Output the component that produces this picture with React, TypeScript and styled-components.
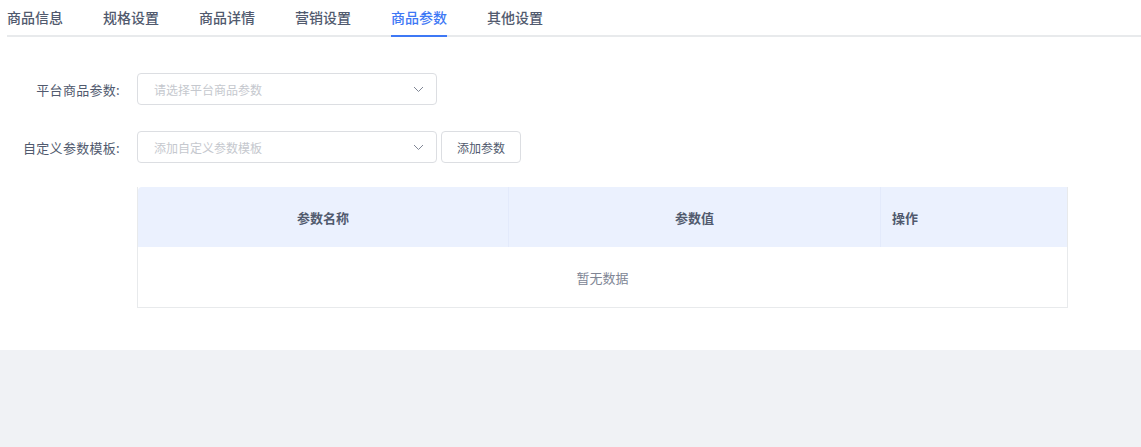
import React from 'react';
import styled, { createGlobalStyle } from 'styled-components';

const GlobalStyle = createGlobalStyle`
  html, body {
    margin: 0;
    padding: 0;
    background: #f0f2f5;
    font-family: "Noto Sans CJK SC", "Noto Sans", sans-serif;
  }
`;

const Card = styled.div`
  background: #fff;
  height: 350px;
  box-sizing: border-box;
  padding-left: 7px;
`;

const TabBar = styled.div`
  display: flex;
  gap: 40px;
  height: 35px;
  border-bottom: 2px solid #e8eaec;
`;

const Tab = styled.div<{ $active?: boolean }>`
  position: relative;
  font-size: 14px;
  line-height: 35px;
  font-weight: 500;
  color: ${(p) => (p.$active ? '#3e78f5' : '#515a6e')};
  cursor: pointer;

  &::after {
    content: '';
    display: ${(p) => (p.$active ? 'block' : 'none')};
    position: absolute;
    left: 0;
    right: 0;
    bottom: -2px;
    height: 2px;
    background: #3e78f5;
  }
`;

const Form = styled.div`
  margin-left: -7px;
  padding-top: 36px;
`;

const FormRow = styled.div`
  display: flex;
  align-items: center;
  height: 32px;
  margin-bottom: 26px;
`;

const Label = styled.label`
  width: 137px;
  box-sizing: border-box;
  padding-right: 17px;
  text-align: right;
  font-size: 13px;
  letter-spacing: 0.3px;
  color: #515a6e;
`;

const Select = styled.div`
  width: 300px;
  height: 32px;
  box-sizing: border-box;
  border: 1px solid #dcdee2;
  border-radius: 4px;
  display: flex;
  align-items: center;
  justify-content: space-between;
  padding: 0 12px 0 16px;
`;

const Placeholder = styled.span`
  font-size: 12px;
  color: #c5c8ce;
`;

const Button = styled.button`
  margin-left: 4px;
  height: 32px;
  width: 80px;
  border: 1px solid #dcdee2;
  border-radius: 4px;
  background: #fff;
  font-family: inherit;
  font-size: 12px;
  color: #515a6e;
  padding: 0;
`;

const Table = styled.div`
  margin-left: 137px;
  margin-top: -2px;
  width: 931px;
  border: 1px solid #e8eaec;
  border-top: none;
  box-sizing: border-box;
`;

const HeadRow = styled.div`
  display: grid;
  grid-template-columns: 370px 372px 1fr;
  height: 60px;
  background: #ebf1fe;
  border-radius: 4px 0 0 0;
`;

const HeadCell = styled.div<{ $align?: 'center' | 'left' }>`
  display: flex;
  align-items: center;
  justify-content: ${(p) => (p.$align === 'left' ? 'flex-start' : 'center')};
  padding-left: ${(p) => (p.$align === 'left' ? '11px' : '0')};
  font-size: 13px;
  font-weight: 600;
  color: #515a6e;
  & + & {
    border-left: 1px solid #e3eafb;
  }
`;

const Empty = styled.div`
  height: 60px;
  display: flex;
  align-items: center;
  justify-content: center;
  font-size: 13px;
  color: #808695;
`;

const Chevron = () => (
  <svg width="11" height="7" viewBox="0 0 11 7" fill="none">
    <polyline points="1,1 5.5,5.5 10,1" stroke="#808695" strokeWidth="1" />
  </svg>
);

const tabs = ['商品信息', '规格设置', '商品详情', '营销设置', '商品参数', '其他设置'];

export default function App() {
  return (
    <>
      <GlobalStyle />
      <Card>
        <TabBar>
          {tabs.map((t) => (
            <Tab key={t} $active={t === '商品参数'}>{t}</Tab>
          ))}
        </TabBar>
        <Form>
          <FormRow>
            <Label>平台商品参数:</Label>
            <Select>
              <Placeholder>请选择平台商品参数</Placeholder>
              <Chevron />
            </Select>
          </FormRow>
          <FormRow>
            <Label>自定义参数模板:</Label>
            <Select>
              <Placeholder>添加自定义参数模板</Placeholder>
              <Chevron />
            </Select>
            <Button>添加参数</Button>
          </FormRow>
          <Table>
            <HeadRow>
              <HeadCell>参数名称</HeadCell>
              <HeadCell>参数值</HeadCell>
              <HeadCell $align="left">操作</HeadCell>
            </HeadRow>
            <Empty>暂无数据</Empty>
          </Table>
        </Form>
      </Card>
    </>
  );
}
